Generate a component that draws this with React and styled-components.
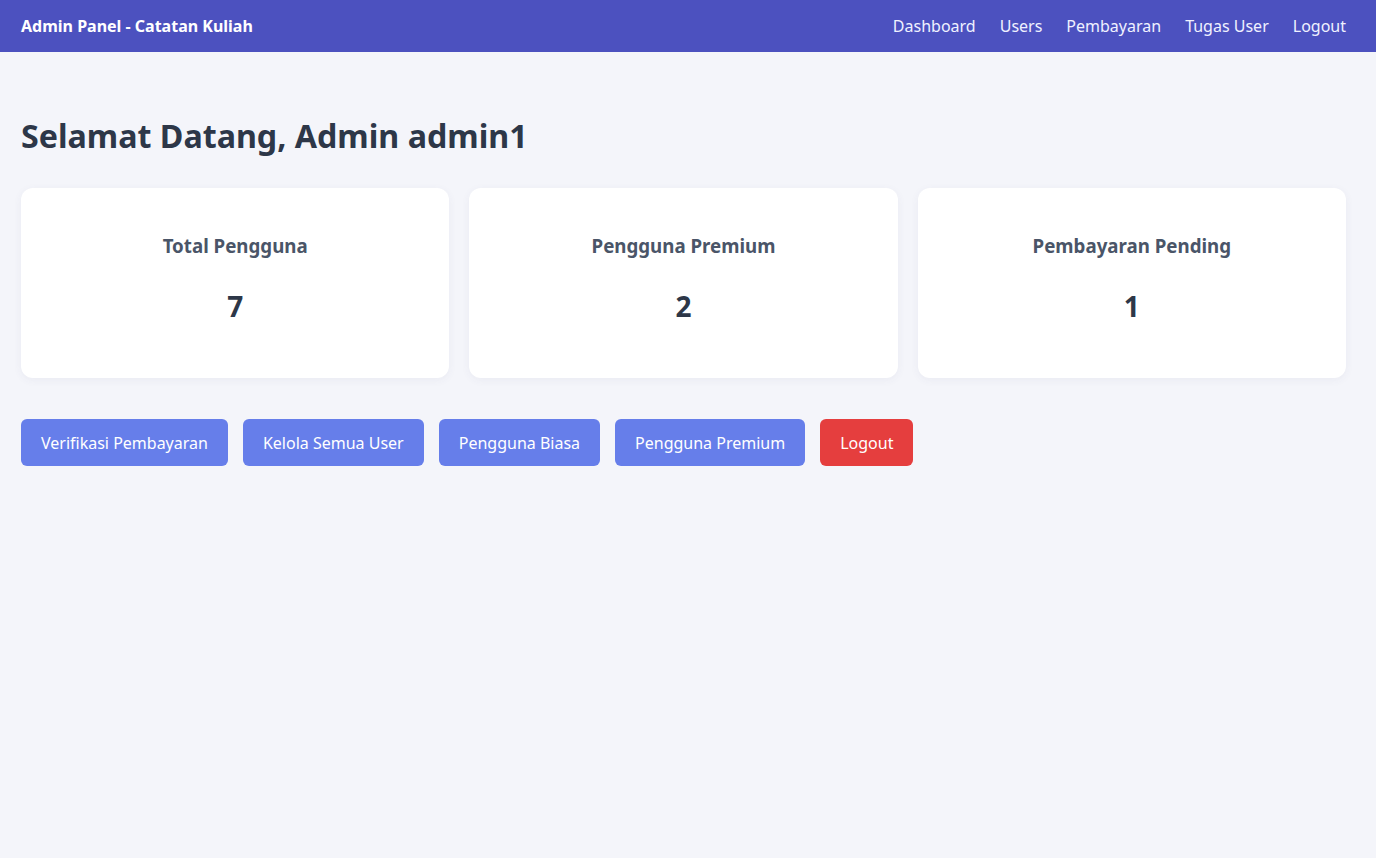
import React from "react";
import styled, {createGlobalStyle} from "styled-components";

const GlobalStyle = createGlobalStyle`
  html, body {
    margin: 0;
    padding: 0;
    background: #f4f5fa;
    font-family: "Noto Sans", "Open Sans", sans-serif;
  }
  * {
    box-sizing: border-box;
  }
`

const Nav = styled.nav`
  height: 52px;
  background-color: #4c51bf;
  color: #fff;
  display: flex;
  flex-direction: row;
  justify-content: space-between;
  align-items: center;
  padding: 0 30px 0 21px;

  .brand {
    font-weight: bold;
    font-size: 16px;
  }
`

const NavLinks = styled.div`
  display: flex;
  flex-direction: row;
  gap: 24px;

  a {
    color: #f0f1ff;
    text-decoration: none;
    font-size: 16px;
  }
`

const Main = styled.main`
  padding: 64px 30px 40px 21px;

  h1 {
    margin: 0 0 32px 0;
    font-size: 32.2px;
    line-height: 40px;
    color: #2d3748;
  }
`

const Cards = styled.div`
  display: grid;
  grid-template-columns: repeat(3, 1fr);
  gap: 20px;
`

const Card = styled.div`
  background: #fff;
  border-radius: 12px;
  height: 190px;
  box-shadow: 0 2px 8px rgba(60, 70, 120, 0.06);
  display: flex;
  flex-direction: column;
  align-items: center;
  padding-top: 44px;

  h3 {
    margin: 0;
    font-size: 18.72px;
    line-height: 28px;
    color: #4a5568;
    font-weight: bold;
  }

  p {
    margin: 29px 0 0 0;
    font-size: 28px;
    line-height: 34px;
    font-weight: bold;
    color: #2d3748;
  }
`

const Actions = styled.div`
  display: flex;
  flex-direction: row;
  gap: 15px;
  margin-top: 41px;
`

const Button = styled.button`
  height: 47px;
  padding: 0 20px;
  border: none;
  border-radius: 6px;
  font-family: inherit;
  font-size: 16px;
  color: #fff;
  background-color: ${p => p.$danger ? '#e53e3e' : '#667eea'};
  cursor: pointer;
`

const stats = [
    {label: 'Total Pengguna', value: 7},
    {label: 'Pengguna Premium', value: 2},
    {label: 'Pembayaran Pending', value: 1},
]

export default function App() {
    return (<div>
        <GlobalStyle/>
        <Nav>
            <span className={'brand'}>Admin Panel - Catatan Kuliah</span>
            <NavLinks>
                <a href="#">Dashboard</a>
                <a href="#">Users</a>
                <a href="#">Pembayaran</a>
                <a href="#">Tugas User</a>
                <a href="#">Logout</a>
            </NavLinks>
        </Nav>
        <Main>
            <h1>Selamat Datang, Admin admin1</h1>
            <Cards>
                {stats.map(s => (
                    <Card key={s.label}>
                        <h3>{s.label}</h3>
                        <p>{s.value}</p>
                    </Card>
                ))}
            </Cards>
            <Actions>
                <Button>Verifikasi Pembayaran</Button>
                <Button>Kelola Semua User</Button>
                <Button>Pengguna Biasa</Button>
                <Button>Pengguna Premium</Button>
                <Button $danger>Logout</Button>
            </Actions>
        </Main>
    </div>)
}
